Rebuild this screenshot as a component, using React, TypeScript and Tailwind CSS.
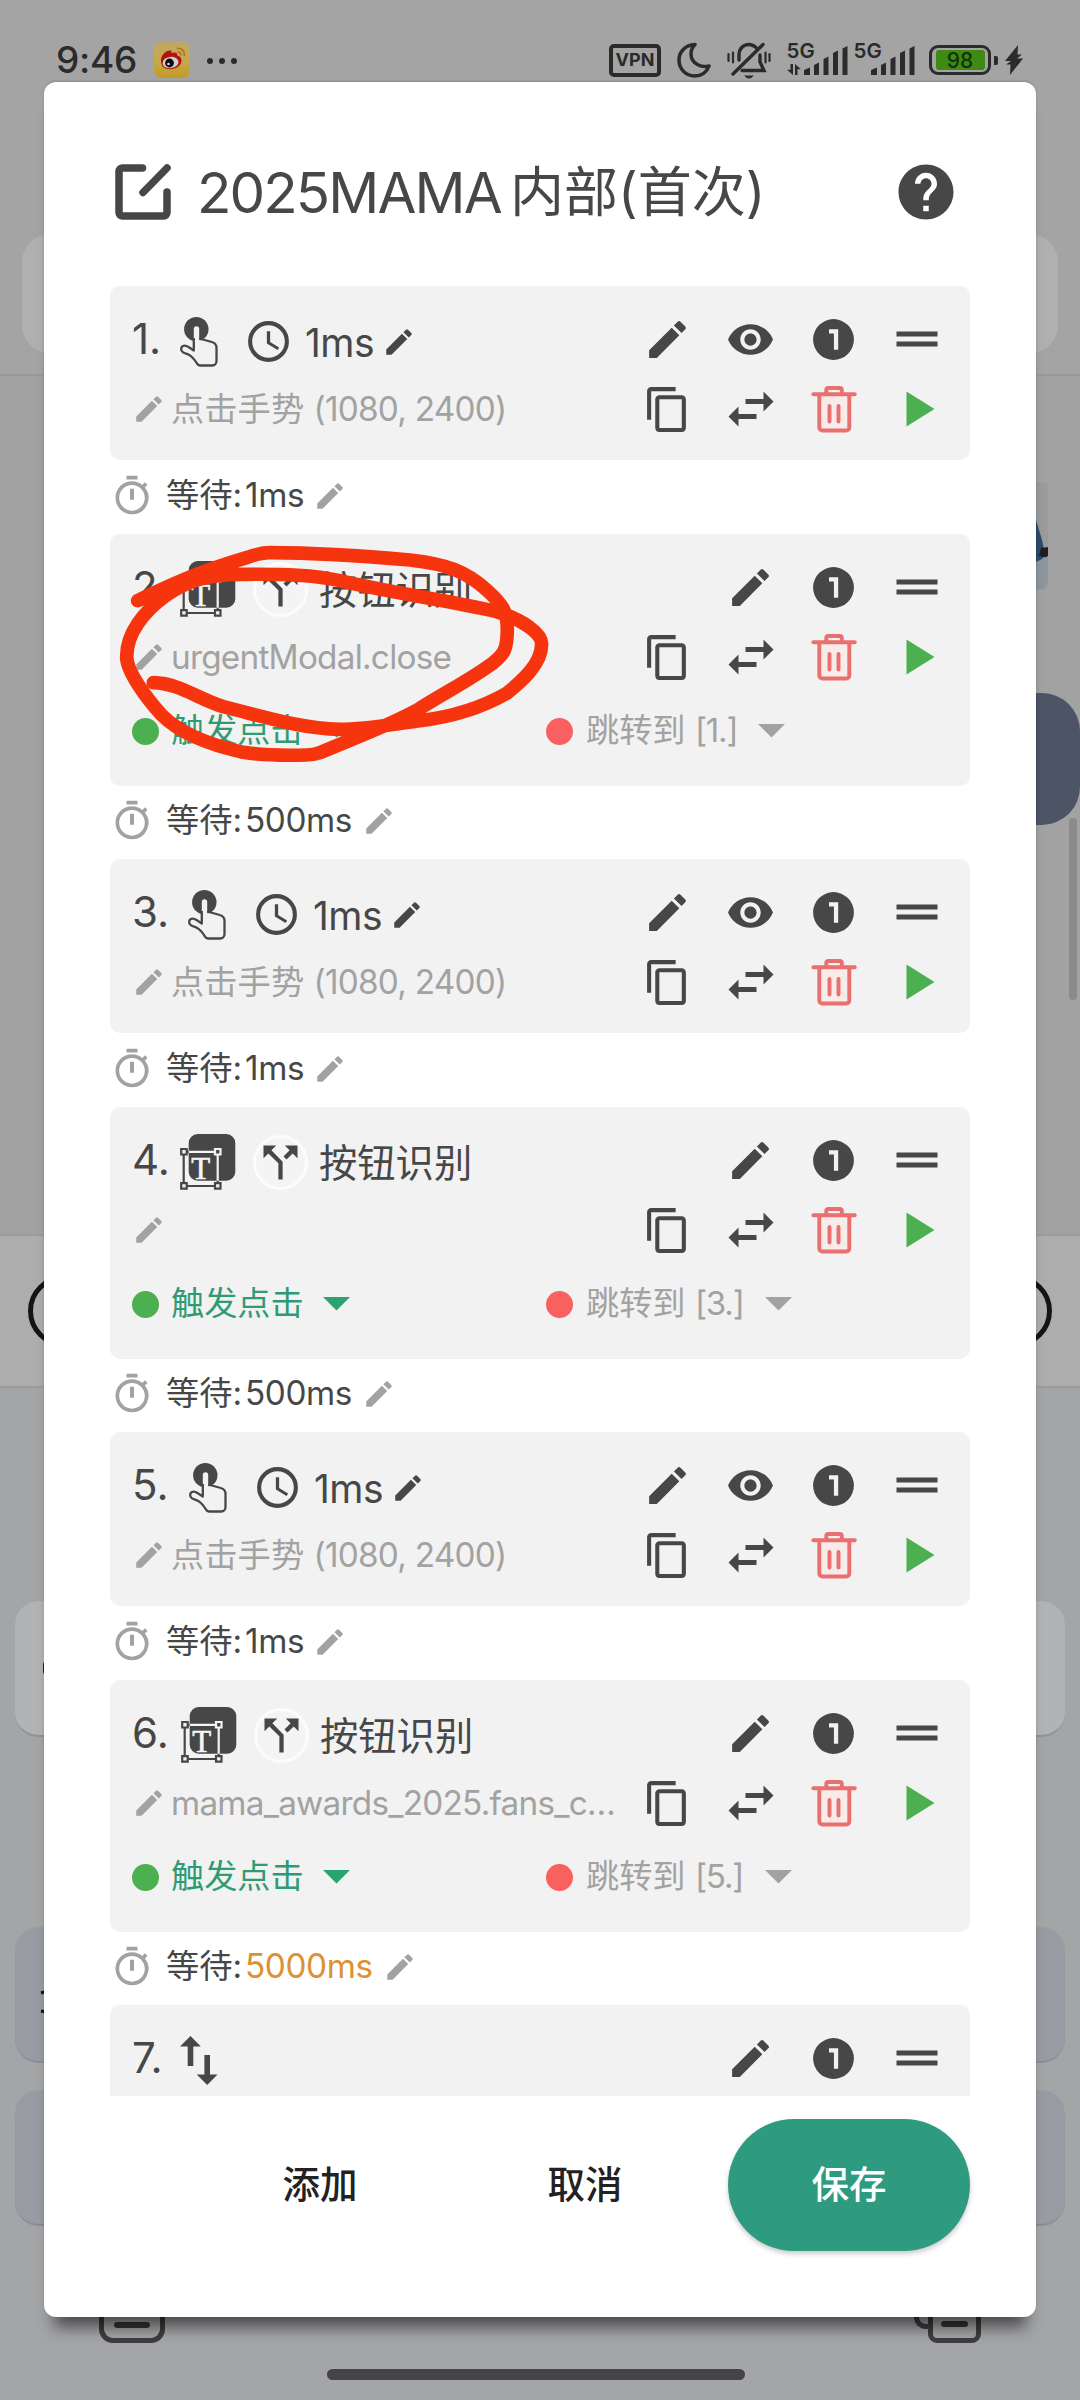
import React from "react";

type IconProps = { className?: string };

const EDIT =
  "M3 17.25V21h3.75L17.81 9.94l-3.75-3.75L3 17.25zM20.71 7.04a1 1 0 0 0 0-1.41l-2.34-2.34a1 1 0 0 0-1.41 0l-1.83 1.83 3.75 3.75 1.83-1.83z";

function Glyph({ d, className }: { d: string; className?: string }) {
  return (
    <svg viewBox="0 0 24 24" fill="currentColor" className={className}>
      <path fillRule="evenodd" d={d} />
    </svg>
  );
}

const Pencil = ({ className }: IconProps) => <Glyph d={EDIT} className={className} />;

const Eye = () => (
  <Glyph
    className="size-[49px]"
    d="M12 4.5C7 4.5 2.73 7.61 1 12c1.73 4.39 6 7.5 11 7.5s9.27-3.11 11-7.5c-1.73-4.39-6-7.5-11-7.5zM12 17c-2.76 0-5-2.24-5-5s2.24-5 5-5 5 2.24 5 5-2.24 5-5 5zm0-8c-1.66 0-3 1.34-3 3s1.34 3 3 3 3-1.34 3-3-1.34-3-3-3z"
  />
);

const OneCircle = () => (
  <Glyph
    className="size-[49px]"
    d="M12 2a10 10 0 1 0 0 20 10 10 0 0 0 0-20zM9.8 7v2.1h2.4V17h2.1V7z"
  />
);

const Handle = () => (
  <svg viewBox="0 0 50 50" fill="currentColor" className="size-[50px]">
    <path d="M4.5 17.500h41v5h-41zM4.500 27.500h41v5h-41z" />
  </svg>
);

const Copy = () => (
  <Glyph
    className="size-[49px]"
    d="M16 1H4c-1.1 0-2 .9-2 2v14h2V3h12V1zm3 4H8c-1.1 0-2 .9-2 2v14c0 1.1.9 2 2 2h11c1.1 0 2-.9 2-2V7c0-1.1-.9-2-2-2zm0 16H8V7h11v14z"
  />
);

const Swap = () => (
  <svg viewBox="0 0 50 50" fill="currentColor" className="size-[50px]">
    <path d="M19.500 15H37.500V7.500L47.500 17.500 37.500 27.500V20H19.500zM30.500 30H12.500V22.500L2.500 32.500l10 10V35h18z" />
  </svg>
);

const Trash = () => (
  <svg viewBox="0 0 50 50" fill="none" className="size-[50px]">
    <path d="M9 12v31a4 4 0 0 0 4 4h24.500a4 4 0 0 0 4-4V12" fill="#f7ecea" />
    <g stroke="#ea6f6f" strokeWidth="3.900" strokeLinecap="round" strokeLinejoin="round">
      <path d="M4.300 10.300h41.500M17.300 9.500V6a2 2 0 0 1 2-2h11.500a2 2 0 0 1 2 2v3.500" />
      <path d="M10.300 11.500v32a3 3 0 0 0 3 3h24a3 3 0 0 0 3-3v-32M20.500 22v15.500M29.500 22v15.500" />
    </g>
  </svg>
);

const Play = () => (
  <svg viewBox="0 0 50 50" fill="#4caf50" className="size-[50px]">
    <path d="M14.500 7.500v35l28-17.500z" />
  </svg>
);

const Tap = () => (
  <svg viewBox="0 0 38 50" className="h-[50px] w-[38px] shrink-0">
    <circle cx="16.300" cy="12.200" r="12.200" fill="#474747" />
    <path
      d="M13.800 12a2.700 2.700 0 0 1 5.400 0V23l12.500 3.200a6 6 0 0 1 4.800 5.600V44.500a4 4 0 0 1-4 4H19.500c-2 0-2.400-1.600-3.500-3.200C12.800 40.500 10 37.500 4.800 36.500 1.500 35.800.6 33 1.500 30.200c1.500-2 5-1.500 7.500.5L13.800 34z"
      fill="#f2f2f2"
    />
    <path
      d="M13.800 21v12.500L8.500 30c-2.500-1.600-5.500-1.800-6.800 0-1.300 3 .2 5.600 3.600 6.300 5 1 8 4.500 10.700 8.700 1.200 1.800 1.500 3.500 4 3.500h12.300a4.200 4.200 0 0 0 4.200-4.200V31a6.200 6.200 0 0 0-4.700-6L19.300 21.500"
      fill="none"
      stroke="#474747"
      strokeWidth="2.300"
      strokeLinejoin="round"
    />
  </svg>
);

const Clock = () => (
  <svg viewBox="0 0 24 24" fill="none" className="size-[49px] shrink-0">
    <circle cx="12" cy="12" r="9" stroke="#474747" strokeWidth="2" />
    <path d="M11.200 7h1.600v5.250l4.400 2.650-.75 1.230L11.200 13z" fill="#474747" />
  </svg>
);

const Timer = () => (
  <Glyph
    className="size-[44px] shrink-0 text-[#a2a2a2]"
    d="M15 1H9v2h6V1zm-4.100 13h2.200V8h-2.200v6zm8.130-6.610l1.420-1.420c-.43-.51-.9-.99-1.410-1.410l-1.420 1.420A8.962 8.962 0 0 0 12 4c-4.970 0-9 4.030-9 9s4.020 9 9 9a8.994 8.994 0 0 0 7.030-14.610zM12 20c-3.870 0-7-3.130-7-7s3.130-7 7-7 7 3.130 7 7-3.130 7-7 7z"
  />
);

function Frame({ color }: { color: string }) {
  return (
    <g fill="none" stroke={color} strokeWidth="2.200">
      <path d="M7 17.800h27.500M7 52h27.500M3.700 21v27.500M37.700 21v27.500" />
      <path d="M1.200 15h5.500v5.500H1.200zM35 15h5.500v5.500H35zM1.200 49.200h5.500v5.500H1.200zM35 49.200h5.500v5.500H35z" />
    </g>
  );
}

const TextFrame = ({ id }: { id: string }) => (
  <svg viewBox="0 0 56 56" className="size-[56px] shrink-0">
    <defs>
      <clipPath id={id}>
        <rect x="8.700" y="0" width="46.600" height="46.700" rx="9" />
      </clipPath>
    </defs>
    <Frame color="#474747" />
    <rect x="8.700" y="0" width="46.600" height="46.700" rx="9" fill="#474747" />
    <g clipPath={`url(#${id})`}>
      <Frame color="#f5f5f5" />
    </g>
    <text
      x="20.800"
      y="45.300"
      textAnchor="middle"
      fontFamily="Liberation Serif, serif"
      fontSize="31"
      fill="#f5f5f5"
      stroke="#f5f5f5"
      strokeWidth="0.600"
    >
      T
    </text>
  </svg>
);

const Split = () => (
  <span className="flex size-[55px] shrink-0 items-center justify-center rounded-full border-[3px] border-[#fcfcfc] bg-[#f4f4f4]">
    <svg viewBox="0 0 24 24" fill="#474747" className="size-[51px] shrink-0">
      <path d="M14 4l2.290 2.290-2.880 2.880 1.420 1.420 2.880-2.880L20 10V4zm-4 0H4v6l2.290-2.290 4.710 4.700V20h2v-8.410l-5.290-5.300z" />
    </svg>
  </span>
);

const UpDown = () => (
  <svg viewBox="0 0 38 49" fill="#474747" className="h-[49px] w-[38px]">
    <path d="M10.500 0l10.300 10.500H13.300V30H7.700V10.500H0zM27.200 49L16.700 38.500h7.700V19H30v19.500h7.500z" />
  </svg>
);

function Actions({ eye }: { eye?: boolean }) {
  return (
    <div className="grid shrink-0 grid-cols-[repeat(4,83px)] grid-rows-[70px_70px] place-items-center text-[#474747]">
      {eye ? <Pencil className="size-[49px]" /> : <span />}
      {eye ? <Eye /> : <Pencil className="size-[49px]" />}
      <OneCircle />
      <Handle />
      <Copy />
      <Swap />
      <Trash />
      <Play />
    </div>
  );
}

type Step = {
  n: number;
  kind: "tap" | "button" | "move";
  numWidth: string;
  desc?: string;
  coords?: string;
  jump?: string;
  jumpGap?: string;
  wait?: string;
  waitWidth?: string;
  waitHeight?: string;
  waitColor?: string;
};

const TAP = { desc: "点击手势 ", coords: "(1080, 2400)", wait: "1ms", waitWidth: "w-[68px]", waitHeight: "h-[74px]" };

const steps: Step[] = [
  { n: 1, kind: "tap", numWidth: "w-[48px]", ...TAP },
  { n: 2, kind: "button", numWidth: "w-[48px]", coords: "urgentModal.close", jump: "[1.]", jumpGap: "w-[172px]", wait: "500ms", waitWidth: "w-[117px]", waitHeight: "h-[73px]" },
  { n: 3, kind: "tap", numWidth: "w-[56px]", ...TAP },
  { n: 4, kind: "button", numWidth: "w-[48px]", jump: "[3.]", jumpGap: "w-[179px]", wait: "500ms", waitWidth: "w-[117px]", waitHeight: "h-[73px]" },
  { n: 5, kind: "tap", numWidth: "w-[57px]", ...TAP },
  { n: 6, kind: "button", numWidth: "w-[49px]", coords: "mama_awards_2025.fans_c…", jump: "[5.]", jumpGap: "w-[179px]", wait: "5000ms", waitWidth: "w-[138px]", waitHeight: "h-[73px]", waitColor: "text-[#dc9133]" },
  { n: 7, kind: "move", numWidth: "w-[48px]" },
];

function StepCard({ s }: { s: Step }) {
  return (
    <>
      <section
        className={`w-[860px] shrink-0 rounded-[10px] bg-[#f2f2f2] pt-[18px] ${
          s.kind === "button" ? "h-[252px]" : "h-[174px]"
        }`}
      >
        <div className="flex justify-between pr-[12px] pl-[22px]">
          <div className="min-w-0 text-[#474747]">
            <div className="flex h-[70px] items-center whitespace-nowrap">
              <span className={`${s.numWidth} shrink-0 text-[42px]`}>{s.n}.</span>
              {s.kind === "tap" && (
                <div className="flex items-center pt-[5px]">
                  <Tap />
                  <span className="w-[26px]" />
                  <Clock />
                  <span className="ml-[12px] w-[77px] pt-[1px] text-[39px] tracking-[-0.5px]">1ms</span>
                  <Pencil className="size-[34px] shrink-0" />
                </div>
              )}
              {s.kind === "button" && (
                <div className="flex items-center pt-[4px]">
                  <TextFrame id={`frame-${s.n}`} />
                  <span className="w-[17px]" />
                  <Split />
                  <span className="ml-[11px] pt-[2px] text-[38.300px]">按钮识别</span>
                </div>
              )}
              {s.kind === "move" && (
                <div className="pt-[5px]">
                  <UpDown />
                </div>
              )}
            </div>
            {s.kind !== "move" && (
              <div className="flex h-[70px] items-center text-[33.300px] whitespace-nowrap text-[#a2a2a2]">
                <Pencil className="mr-[5px] size-[34px] shrink-0" />
                <p className="pt-[2px] whitespace-pre">
                  {s.desc}
                  <span className="tracking-[-0.75px]">{s.coords}</span>
                </p>
              </div>
            )}
          </div>
          <Actions eye={s.kind === "tap"} />
        </div>
        {s.jump && (
          <div className="flex h-[78px] items-center pl-[22px] text-[33.200px] whitespace-nowrap">
            <i className="size-[27px] rounded-full bg-[#4caf50]" />
            <span className="ml-[12px] w-[152px] text-[#2f9b74]">触发点击</span>
            <svg viewBox="0 0 27 14" className="h-[14px] w-[27px] fill-[#2ba36f]">
              <path d="M0 0h27L13.500 13.500z" />
            </svg>
            <i className="ml-[196px] size-[27px] rounded-full bg-[#f96060]" />
            <span className={`${s.jumpGap} ml-[13px] text-[#a2a2a2]`}>
              跳转到 <span className="tracking-[-1.200px]">{s.jump}</span>
            </span>
            <svg viewBox="0 0 27 14" className="h-[14px] w-[27px] fill-[#a2a2a2]">
              <path d="M0 0h27L13.500 13.500z" />
            </svg>
          </div>
        )}
      </section>
      {s.wait && (
        <div className={`flex shrink-0 items-center pb-[3px] text-[33.300px] whitespace-nowrap text-[#474747] ${s.waitHeight}`}>
          <Timer />
          <span className="ml-[12px] w-[79px]">等待:</span>
          <span className={`tracking-[-0.400px] ${s.waitWidth} ${s.waitColor ?? ""}`}>{s.wait}</span>
          <Pencil className="size-[34px] text-[#a2a2a2]" />
        </div>
      )}
    </>
  );
}

function Signal({ data }: { data?: boolean }) {
  return (
    <svg viewBox="0 0 63 38" className="h-[38px] w-[63px] overflow-visible fill-[#2b2b2b]">
      <text x="0.500" y="17" fontFamily="Inter, sans-serif" fontWeight="600" fontSize="20.500">
        5G
      </text>
      {data && <path d="M4.500 23h2.500v11L1 28.800h3.500zM9 34V23l6 5.200h-3.500V34z" />}
      <path d="M18 34v-5l6-2.500V34zM28 34V24l5-2.500V34zM37.500 34V18l5-2.500V34zM47 34V12l5-2.500V34zM56.500 34V7.500l5-2.500v29z" />
    </svg>
  );
}

function StatusBar() {
  return (
    <div className="flex h-[82px] items-center justify-between pt-[38px] pr-[57px] pb-0 pl-[56px] text-[#2b2b2b]">
      <div className="flex h-[44px] items-center">
        <span className="w-[98px] text-[37px] leading-[44px] font-medium tracking-[-0.300px]">9:46</span>
        <svg viewBox="0 0 36 36" className="size-[36px]">
          <defs>
            <linearGradient id="wb" x1="0" y1="0" x2="0" y2="1">
              <stop offset="0" stopColor="#c0a564" />
              <stop offset="0.500" stopColor="#c6aa4e" />
              <stop offset="1" stopColor="#c09a22" />
            </linearGradient>
          </defs>
          <rect width="36" height="36" rx="8" fill="url(#wb)" />
          <path
            d="M7 19.500C6 13 13 8 16.500 8.500c1.500.2 1 2 .8 2.800 2.500-1.200 6.500-1.300 6 2.200 3 .7 4.500 2.500 4.200 5.500-.5 5-6 8.200-11.500 8.200S7.500 24.500 7 19.500z"
            fill="#b3130b"
          />
          <ellipse cx="16.500" cy="20.500" rx="8" ry="5.600" fill="#cfcfcf" transform="rotate(-8 16.500 20.500)" />
          <circle cx="15.500" cy="21" r="4.400" fill="#0a0a0a" />
          <circle cx="14.500" cy="22" r="1.300" fill="#ddd" />
          <path d="M23 6.500c4.500-.8 8 2.500 7.200 7.500M23.500 10c2.200-.2 3.800 1.200 3.500 3.500" fill="none" stroke="#b3701c" strokeWidth="1.500" />
        </svg>
        <span className="ml-[17px] flex gap-[6px] pt-[1px]">
          <i className="size-[6px] rounded-full bg-[#2b2b2b]" />
          <i className="size-[6px] rounded-full bg-[#2b2b2b]" />
          <i className="size-[6px] rounded-full bg-[#2b2b2b]" />
        </span>
      </div>
      <div className="flex h-[44px] items-center">
        <span className="flex h-[33px] w-[52px] items-center justify-center rounded-[5px] border-[4px] border-[#2b2b2b] text-[18px] font-bold">
          VPN
        </span>
        <svg viewBox="0 0 34 36" className="ml-[16px] h-[36px] w-[34px]" fill="none" stroke="#2b2b2b" strokeWidth="3.500" strokeLinejoin="round">
          <path d="M18 2.500C8 3 2 10 2 18c0 9 7 16 15.500 16 7 0 12.500-4 14.500-10C25 26 14 22 14 12c0-4 1.500-7 4-9.500z" />
        </svg>
        <svg viewBox="0 0 44 38" className="ml-[16px] h-[38px] w-[44px]" fill="none" stroke="#2b2b2b" strokeWidth="3.400" strokeLinecap="round">
          <path d="M12 19v-5c0-6 4-10.500 10-10.500 3 0 5 1 7 3M36 3.500L6 33M33 14v7l4 8.500H15" />
          <path d="M1.500 13v7M6 11.500v10M38.500 11.500v10M42.500 13v7" strokeWidth="2.200" />
          <path d="M17 34.500h10q-5 6-10 0z" fill="#2b2b2b" stroke="none" />
        </svg>
        <span className="ml-[15px]">
          <Signal data />
        </span>
        <span className="ml-[4px]">
          <Signal />
        </span>
        <span className="ml-[13px] flex h-[30px] w-[62px] items-center justify-center rounded-[9px] border-[3px] border-[#2b2b2b] p-[3px]">
          <span className="flex h-[20px] w-[49px] items-center justify-center rounded-[3px] bg-[#3f8a12] text-[21px] font-medium text-[#123306]">
            98
          </span>
        </span>
        <i className="ml-[3px] h-[9px] w-[4px] rounded-r-[2px] bg-[#2b2b2b]" />
        <svg viewBox="0 0 18 30" className="ml-[7px] h-[30px] w-[18px] fill-[#2b2b2b]">
          <path d="M13 0L0 16h6L1 19.500h4.500L5 30l13-16.500h-6l5-4h-4.500z" />
        </svg>
      </div>
    </div>
  );
}

/* Chat screen and keyboard dimmed behind the dialog. */
function Backdrop() {
  return (
    <div className="flex h-[2400px] w-[1080px] flex-col bg-[#a4a4a4]">
      <StatusBar />
      <div className="h-[294px] border-b-2 border-[#989898] px-[22px] pt-[152px]">
        <div className="h-[119px] rounded-[28px] bg-[#b0b0b0]" />
      </div>
      <div className="flex h-[858px] flex-col items-end bg-[#a2a2a2] pt-[106px]">
        <svg viewBox="0 0 20 108" className="mr-[32px] h-[108px] w-[20px]">
          <path d="M0 0h14q6 0 6 6v96q0 6-6 6H0z" fill="#999b9c" />
          <path d="M8 38l6 20 3 14-9 18z" fill="#2d4a6b" />
          <path d="M13 66l7-1v11l-9-2z" fill="#1d1e20" />
          <path d="M8 80l12-6v24q-1 8-12 10z" fill="#8c969e" />
        </svg>
        <div className="mt-[103px] h-[132px] w-[200px] rounded-[38px] bg-[#4c5466]" />
        <div className="mt-[-7px] mr-[3px] h-[182px] w-[8px] rounded-full bg-[#8b8b87]" />
      </div>
      <div className="flex h-[154px] items-center justify-between border-y-2 border-[#9b9b9b] bg-[#adadad] px-[28px]">
        <i className="size-[72px] rounded-full border-[5px] border-[#151515]" />
        <i className="size-[72px] rounded-full border-[5px] border-[#151515]" />
      </div>
      <div className="flex grow flex-col bg-[#a4a5a7] px-[15px] pt-[213px]">
        <div className="flex h-[136px] items-center rounded-[24px] border-b-2 border-[#909295] bg-[#b1b3b5] pl-[28px]">
          <i className="h-[14px] w-[8px] rounded-full bg-[#222]" />
        </div>
        <div className="mt-[190px] h-[136px] rounded-[24px] border-b-2 border-[#8c8e96] bg-[#999ba2] pt-[62px] pl-[25px]">
          <svg viewBox="0 0 14 26" className="h-[26px] w-[14px]" fill="none" stroke="#111" strokeWidth="3">
            <path d="M1 4l13-4M1 22l5 1 8 1" />
          </svg>
        </div>
        <div className="mt-[27px] h-[136px] rounded-[24px] border-b-2 border-[#8c8e96] bg-[#999ba2]" />
        <div className="mt-[54px] flex h-[63px] items-end justify-between pr-[84px] pl-[84px]">
          <span className="flex h-[60px] w-[66px] items-end justify-center rounded-[14px] border-[5px] border-[#3e3e40] pb-[10px]">
            <i className="h-[6px] w-[36px] rounded-sm bg-[#343436]" />
          </span>
          <span className="flex">
            <i className="h-[48px] w-[14px] rounded-bl-[12px] border-b-[5px] border-l-[5px] border-[#3e3e40]" />
            <span className="flex h-[62px] w-[53px] items-end justify-center rounded-[9px] border-[5px] border-[#3e3e40] pb-[11px]">
              <i className="h-[6px] w-[27px] rounded-sm bg-[#343436]" />
            </span>
          </span>
        </div>
        <div className="mt-[26px] ml-[312px] h-[11px] w-[418px] rounded-full bg-[#444446]" />
      </div>
    </div>
  );
}

/* Freehand marker loop drawn around step 2. */
function MarkerLoop() {
  return (
    <svg
      viewBox="0 0 1440 990"
      className="pointer-events-none absolute top-[520px] left-[100px] h-[330px] w-[480px]"
      fill="none"
      stroke="#f6350f"
      strokeWidth="41"
      strokeLinecap="round"
      strokeLinejoin="round"
    >
      <path d="M113 242C190 205 280 160 440 113Q480 98 510 98C650 99 780 107 930 120C1040 132 1100 155 1160 210C1210 255 1222 275 1222 330C1221 385 1215 400 1180 428C1110 480 1030 520 960 565C880 610 800 640 720 673L660 698Q640 705 620 705C540 707 480 705 430 697C330 675 240 640 185 585C140 535 80 455 80 410C80 340 130 275 200 225C260 185 320 162 430 163C560 162 640 165 720 182C880 220 1040 240 1190 275C1270 300 1325 340 1325 372C1325 430 1270 480 1220 520C1150 560 1060 590 960 602C880 612 800 628 720 628C600 625 500 592 370 560C300 540 240 490 160 488" />
    </svg>
  );
}

export default function App() {
  return (
    <main className="relative h-[2400px] w-[1080px] overflow-hidden font-['Inter','Noto_Sans_CJK_SC',sans-serif] leading-none">
      <Backdrop />
      <div className="absolute top-[82px] left-[44px] flex h-[2235px] w-[992px] flex-col rounded-[12px] bg-white shadow-[0_20px_16px_-10px_rgba(0,0,0,0.550),0_-1px_3px_-1px_rgba(0,0,0,0.350)]">
        <header className="flex h-[204px] shrink-0 items-center pt-[16px] pr-[77px] pl-[71px] text-[#474747]">
          <svg viewBox="0 0 56 56" fill="none" stroke="currentColor" strokeWidth="7.500" strokeLinecap="round" strokeLinejoin="round" className="size-[56px]">
            <path d="M27.500 4H7.500A3.500 3.500 0 0 0 4 7.500v41A3.500 3.500 0 0 0 7.500 52h41a3.500 3.500 0 0 0 3.500-3.500V28M28 28.500L52 4" />
          </svg>
          <h1 className="ml-[26px] flex items-center pt-[2px] text-[54px] whitespace-nowrap">
            <span className="w-[313px] text-[56.500px] tracking-[-1.900px]">2025MAMA</span>
            <span>内部(首次)</span>
          </h1>
          <Glyph
            className="ml-auto size-[66px]"
            d="M12 2C6.480 2 2 6.480 2 12s4.480 10 10 10 10-4.480 10-10S17.520 2 12 2zm1 17h-2v-2h2v2zm2.070-7.750l-.9.92C13.450 12.900 13 13.500 13 15h-2v-.5c0-1.100.45-2.100 1.170-2.830l1.240-1.260c.37-.36.59-.86.59-1.410 0-1.100-.9-2-2-2s-2 .9-2 2H8c0-2.210 1.790-4 4-4s4 1.790 4 4c0 .88-.36 1.680-.93 2.250z"
          />
        </header>
        <div className="ml-[66px] flex h-[1810px] w-[860px] shrink-0 flex-col overflow-hidden">
          {steps.map((s) => (
            <StepCard key={s.n} s={s} />
          ))}
        </div>
        <footer className="flex items-center justify-end pt-[23px] pr-[66px] text-[37.500px] font-medium text-[#222]">
          <button className="h-[132px] w-[242px]">添加</button>
          <button className="ml-[23px] h-[132px] w-[242px]">取消</button>
          <button className="ml-[22px] h-[132px] w-[242px] rounded-full bg-[#2e9b80] text-white shadow-[0_3px_5px_rgba(0,0,0,0.200)]">
            保存
          </button>
        </footer>
      </div>
      <MarkerLoop />
    </main>
  );
}
